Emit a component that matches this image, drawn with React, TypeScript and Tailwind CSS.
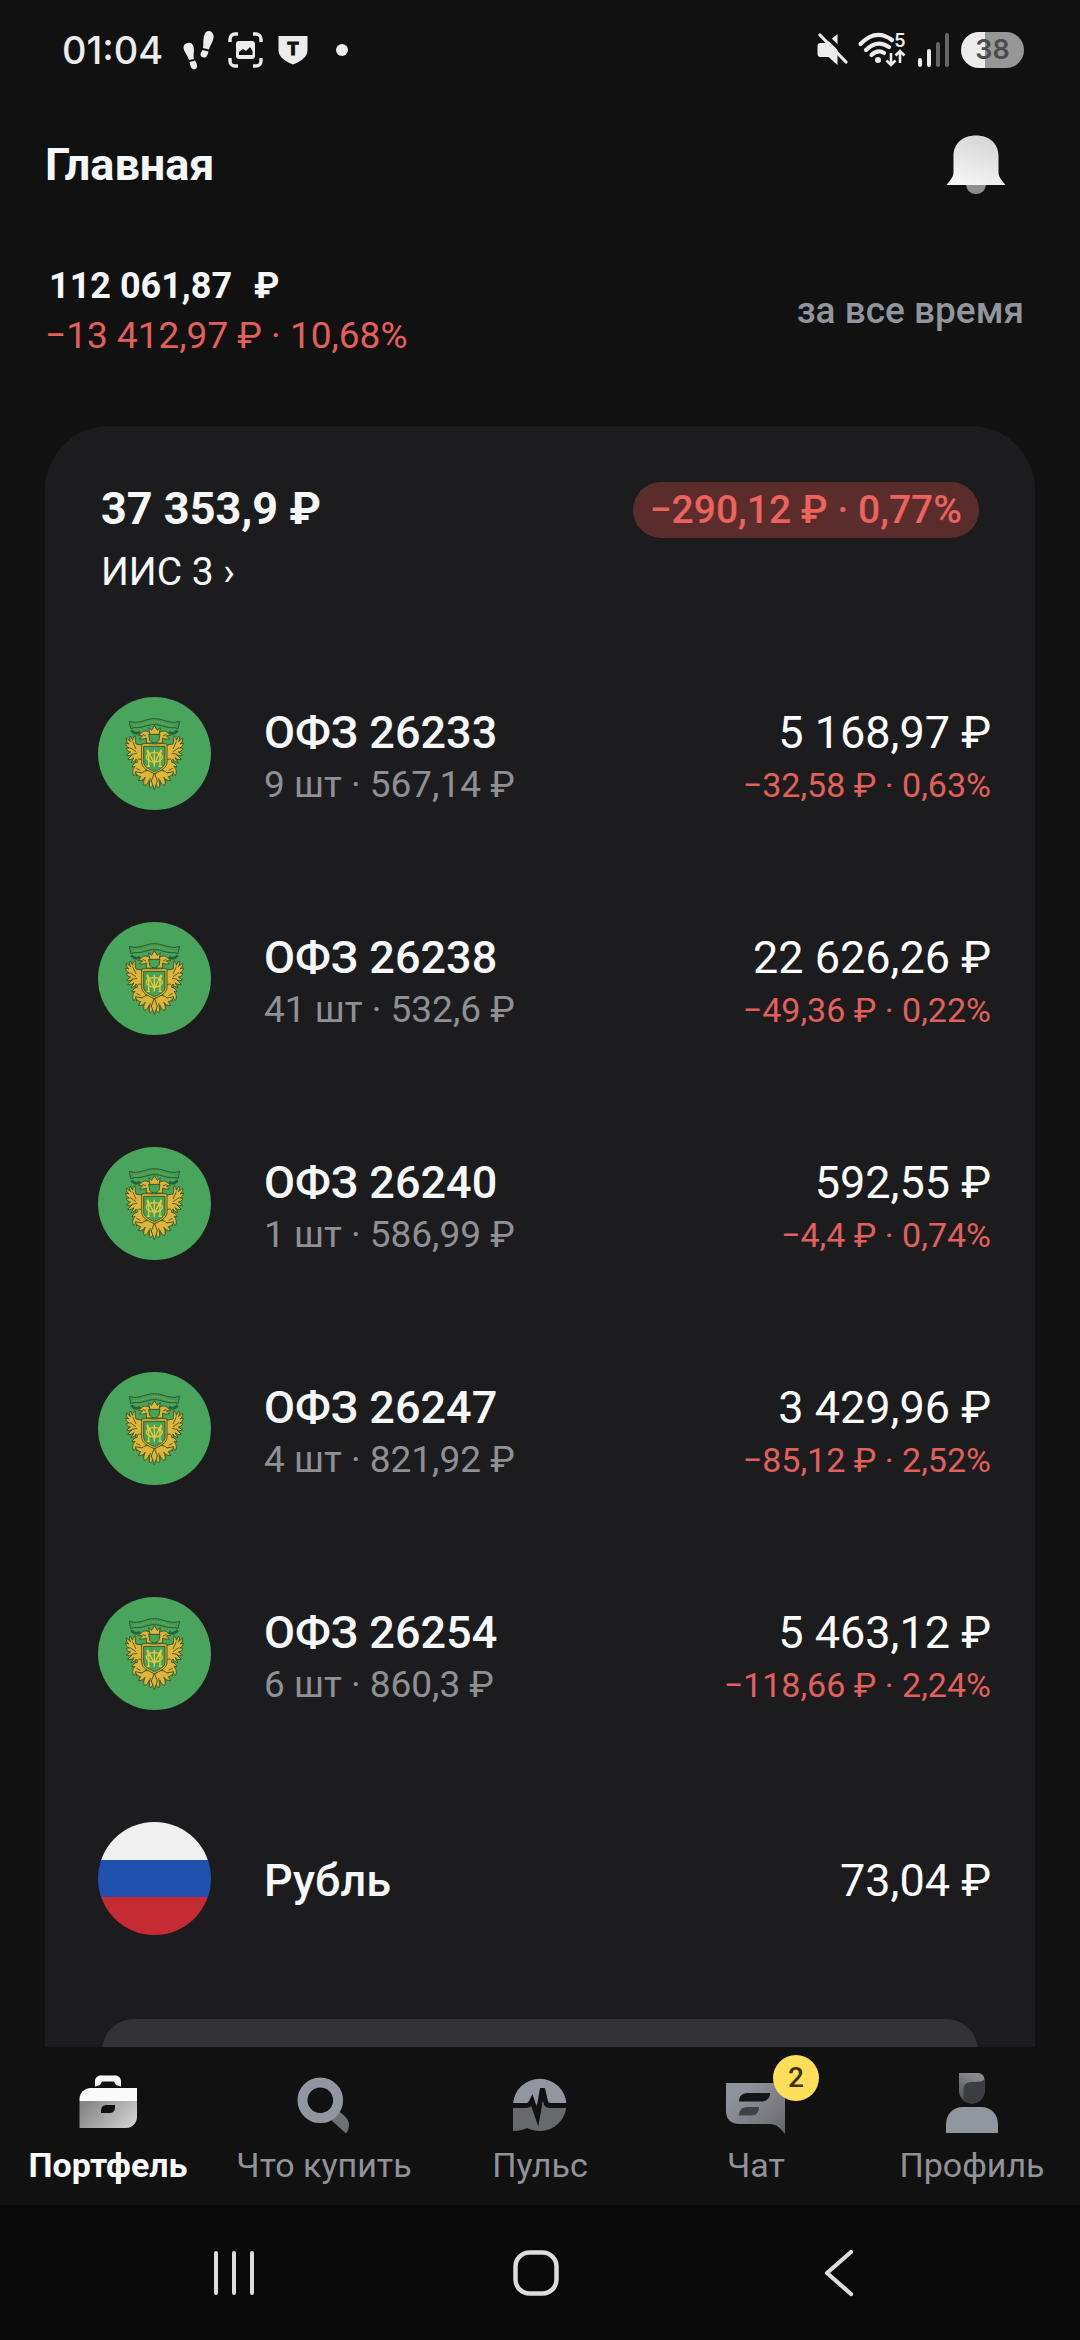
import React from 'react';

interface Position {
  title: string;
  details: string;
  value: string;
  change: string;
}

const positions: Position[] = [
  { title: 'ОФЗ 26233', details: '9 шт · 567,14 ₽', value: '5 168,97 ₽', change: '−32,58 ₽ · 0,63%' },
  { title: 'ОФЗ 26238', details: '41 шт · 532,6 ₽', value: '22 626,26 ₽', change: '−49,36 ₽ · 0,22%' },
  { title: 'ОФЗ 26240', details: '1 шт · 586,99 ₽', value: '592,55 ₽', change: '−4,4 ₽ · 0,74%' },
  { title: 'ОФЗ 26247', details: '4 шт · 821,92 ₽', value: '3 429,96 ₽', change: '−85,12 ₽ · 2,52%' },
  { title: 'ОФЗ 26254', details: '6 шт · 860,3 ₽', value: '5 463,12 ₽', change: '−118,66 ₽ · 2,24%' },
];

const StatusBar: React.FC = () => (
  <div className="flex h-[100px] shrink-0 items-center justify-between pl-[62px] pr-[56px] text-[#ececec]">
    <div className="flex items-center">
      <span className="mr-5 font-[family-name:Inter,sans-serif] text-[38px] leading-[44px] font-medium">01:04</span>
      <svg className="mr-3.5" width="31" height="40" viewBox="0 0 31 40" fill="currentColor">
        <path d="M5 13c4-1 6 3 6 7 0 3-1 6 0 9l-5 1C5 26 1 22 0.500 18 0.300 15 2 13.500 5 13z" />
        <path d="M6.500 32l5.500-1.500c1 2 2.500 4 2 6.500-.5 2.500-4 3-5.500 1C7.500 36.500 7 34 6.500 32z" />
        <path d="M26 1c3.500.5 5 3.500 4.500 7-.5 4-4 8-4.500 11.500l-6-1.500c.5-3 0-6 .5-9C21 4.500 22.500.5 26 1z" />
        <path d="M19.500 20l6 1.500c-.5 2-1 4-2.500 5.500-2 1.500-5.500 0-5.500-2.500 0-1.700 1.200-3 2-4.500z" />
      </svg>
      <svg className="mr-[15px]" width="35" height="36" viewBox="0 0 35 36" fill="none">
        <path d="M2 10V7a5 5 0 0 1 5-5h3M25 2h3a5 5 0 0 1 5 5v3M33 26v3a5 5 0 0 1-5 5h-3M10 34H7a5 5 0 0 1-5-5v-3" stroke="currentColor" strokeWidth="3.400" />
        <rect x="8" y="9" width="19" height="18" rx="3" fill="currentColor" />
        <path d="M11 23v-3l4-3 3 2 4-4 2.500 4v4z" fill="#111" />
      </svg>
      <svg className="mr-7" width="30" height="30" viewBox="0 0 30 30">
        <path d="M0.500 1h29v14c0 7-6 11-14.500 14.500C6.500 26 0.500 22 0.500 15z" fill="currentColor" />
        <text x="15" y="20" textAnchor="middle" fontFamily="'Liberation Mono', monospace" fontWeight="700" fontSize="20" fill="#111" stroke="#111">Т</text>
      </svg>
      <span className="size-3 rounded-full bg-[#ececec]" />
    </div>
    <div className="flex items-center">
      <svg className="mr-2.5" width="32" height="34" viewBox="0 0 32 34">
        <path d="M4.500 10h6L21.500 1v31l-9-8H4.500a3 3 0 0 1-3-3v-8a3 3 0 0 1 3-3z" fill="currentColor" />
        <path d="M6.500 -1l27 27" stroke="#111" strokeWidth="4" />
        <path d="M4 2l26 27" stroke="currentColor" strokeWidth="3.200" strokeLinecap="round" />
      </svg>
      <svg className="mr-3 overflow-visible" width="48" height="36" viewBox="0 0 48 36">
        <g fill="none" stroke="currentColor" strokeWidth="4.200" strokeLinecap="round">
          <path d="M2.500 12Q18 -4 34 8" />
          <path d="M8 18Q19 7 31 15" />
          <path d="M13.500 23Q20 17 26 21" />
        </g>
        <circle cx="20" cy="28" r="3" fill="currentColor" />
        <text x="42" y="15" textAnchor="middle" fontFamily="Inter, sans-serif" fontWeight="600" fontSize="18" fill="currentColor">5</text>
        <path d="M33 21v12m-4.500-4.500L33 33l4.500-4.500M42 31V19m-4.500 4.500L42 19l4.500 4.500" fill="none" stroke="currentColor" strokeWidth="2.600" />
      </svg>
      <svg className="mr-3" width="31" height="36" viewBox="0 0 31 36">
        <rect x="0" y="26" width="4" height="9" rx="2" fill="currentColor" />
        <rect x="9" y="17" width="4" height="18" rx="2" fill="currentColor" />
        <rect x="18" y="10" width="4" height="25" rx="2" fill="#666" />
        <rect x="27" y="1" width="4" height="34" rx="2" fill="#666" />
      </svg>
      <span className="flex h-9 w-[63px] items-center justify-center rounded-full bg-linear-to-r from-[#ececec] from-38% to-[#979797] to-38% font-[family-name:Inter,sans-serif] text-[27px] leading-9 font-semibold text-[#4c4c4c]">
        38
      </span>
    </div>
  </div>
);

const BellIcon: React.FC = () => (
  <svg width="60" height="60" viewBox="0 0 60 60">
    <defs>
      <linearGradient id="bell" x1="0.700" y1="0" x2="0.300" y2="1">
        <stop offset="0" stopColor="#d4d4d4" />
        <stop offset="1" stopColor="#f6f6f6" />
      </linearGradient>
    </defs>
    <path d="M20 48h20c0 7-4 11-10 11s-10-4-10-11z" fill="#8e8e8e" />
    <path d="M7.500 21C7.500 9 16 0.500 30 0.500S52.500 9 52.500 21v16c0 5 3 8 7 13H0.500c4-5 7-8 7-13z" fill="url(#bell)" />
  </svg>
);

// Золотой двуглавый орёл на зелёном круге
const BondLogo: React.FC = () => (
  <svg className="size-[113px] shrink-0" viewBox="0 0 339 339">
    <circle cx="169.500" cy="169.500" r="169.500" fill="#49a45c" />
    <g stroke="#2c4a22" strokeWidth="2.500" strokeLinejoin="round">
      <path d="M94 73l14 3c28 0 36-11 61-11s34 11 62 11l14-3-5 22-10-3c-28 2-38-9-61-9s-33 11-61 9l-10 3z" fill="#3f9a58" />
      <path d="M100 100c8 10 16 12 26 4M239 100c-8 10-16 12-26 4" fill="none" strokeWidth="8" stroke="#23623c" />
      <g fill="#dfb43a">
        <g id="eagle-side">
          <path d="M140 146l-26-5c-3-7-1-14-3-25-5 4-7 8-7 14l-7-13c-4 6-3 11 1 17l-13-11c-1 8 2 13 8 18l-10-3c0 7 4 12 11 15l-9 1c1 7 6 10 13 11l-13 9c6 3 12 2 18-1l-14 14c7 2 13 0 19-5l-9 15c7-1 12-5 16-11l-3 14c6-3 10-8 12-14l6 6h14z" />
          <path d="M159 112c-6-10-18-13-26-7-4 5-10 5-12 11 5-2 9-1 13 1-3 4-8 4-9 9 8 1 14 0 20-3v15h20v-22z" />
          <path d="M138 196c-8-14-22-12-20 0-9 1-14 7-16 14l9-2c-6 8-10 17-4 28 2-5 5-8 10-9l-2 10 13-10 10 5 8-15z" />
          <path d="M169 232c-10-14-26-15-37-4l-20-4c2 9 9 14 16 15l-7 12c9 0 15-3 20-9-4 8-5 16-2 24 8-3 12-10 15-17-2 9-1 16 3 24 6-5 9-12 12-19z" />
        </g>
        <use href="#eagle-side" transform="matrix(-1 0 0 1 339 0)" />
        <path d="M152 92l9 8 8-14 9 14 9-8-4 22h-27z" />
        <path d="M169 228l9 24-9 26-9-26z" />
        <path d="M131 141c18-3 25 0 38 0s20-3 38 0v54c0 18-18 26-38 35-20-9-38-17-38-35z" />
      </g>
      <path d="M152 112h34l-3 18c-4 5-9 7-14 8-5-1-10-3-14-8z" fill="#46a35a" />
      <path d="M137 148h64v48c0 13-14 20-31.500 28-17.500-8-32.500-15-32.500-28z" fill="#46a35a" />
    </g>
    <g fill="none" stroke="#eec53b" strokeWidth="4">
      <path d="M146 160c6 4 7 14 6 48M192 160c-6 4-7 14-6 48M148 158l21 42 21-42M169 158v51M146 208h10M182 208h10" />
      <ellipse cx="169" cy="181" rx="24" ry="14" />
    </g>
    <path d="M104 134l10 22M96 152l18 12M101 172l16-3M235 134l-10 22M243 152l-18 12M238 172l-16-3M142 240l-8 14M197 240l8 14M157 243l-4 24M182 243l4 24M115 214l12 6M224 214l-12 6M134 112l10 5M205 112l-10 5" fill="none" stroke="#5d5c22" strokeWidth="3" />
    <path d="M107 86c26 2 38-12 62-12s36 14 62 12" fill="none" stroke="#79a83f" strokeWidth="5" strokeDasharray="4 3" />
  </svg>
);

const RubleLogo: React.FC = () => (
  <span className="flex size-[113px] shrink-0 flex-col overflow-hidden rounded-full">
    <span className="flex-1 bg-[#f0f0f0]" />
    <span className="flex-1 bg-[#2150ae]" />
    <span className="flex-1 bg-[#c52b32]" />
  </span>
);

const PositionRow: React.FC<Position> = ({ title, details, value, change }) => (
  <li className="flex h-[225px] items-center gap-[53px]">
    <BondLogo />
    <div className="flex-1 pt-2">
      <p className="text-[45px] leading-[54px] font-medium text-[#f6f7f8]">{title}</p>
      <p className="text-[37px] leading-[50px] text-[#8f9094]">{details}</p>
    </div>
    <div className="pt-2 text-right">
      <p className="text-[45px] leading-[54px] text-white">{value}</p>
      <p className="text-[34px] leading-[50px] text-[#e2605b]">{change}</p>
    </div>
  </li>
);

const BriefcaseIcon: React.FC = () => (
  <svg width="64" height="60" viewBox="0 0 64 60">
    <defs>
      <linearGradient id="case" x1="0" y1="0.300" x2="1" y2="0.700">
        <stop offset="0" stopColor="#858585" />
        <stop offset="1" stopColor="#cfcfcf" />
      </linearGradient>
    </defs>
    <path d="M19 13.500V8c0-3 2.500-5.500 5.500-5.500h15c3 0 5.500 2.500 5.500 5.500v5.500l-5-1.500-2-3.500H26L24 12z" fill="#fafafa" />
    <path d="M3.500 28v-2c0-6 5-11 11-11H61v13z" fill="#fafafa" />
    <path d="M3.500 28H61v16c0 6-5 11-11 11H3.500z" fill="url(#case)" />
    <path d="M25 40v-2c0-4 2-6 6-6h8v2c0 4-2 6-6 6z" fill="#111" />
  </svg>
);

const SearchIcon: React.FC = () => (
  <svg width="64" height="60" viewBox="0 0 64 60">
    <path d="M39 47l9-8c6 5 9 8 9 13 0 3-1 6-3 8.500z" fill="#6f7073" />
    <circle cx="28.300" cy="27.300" r="17.800" fill="none" stroke="#9197a0" strokeWidth="10" />
  </svg>
);

const PulseIcon: React.FC = () => (
  <svg width="64" height="60" viewBox="0 0 64 60">
    <path d="M5 31a26.800 26.800 0 0 1 53.500 0z" fill="#9197a0" />
    <path d="M5 31h53.500c0 15-12 27-26.500 27-5 0-9-1-13-3-4 2-8 3-14 3z" fill="#68696c" />
    <path d="M4 32.500h13c4 0 5-1 7-5l5.500 16 5-28 3 13c.5 3 2 4 5 4H60" fill="none" stroke="#111" strokeWidth="5" />
  </svg>
);

const ChatIcon: React.FC = () => (
  <svg width="64" height="60" viewBox="0 0 64 60" className="overflow-visible">
    <defs>
      <linearGradient id="chat" x1="0" y1="0" x2="1" y2="1">
        <stop offset="0.200" stopColor="#8e939b" />
        <stop offset="0.700" stopColor="#77797e" />
        <stop offset="1" stopColor="#606165" />
      </linearGradient>
    </defs>
    <path d="M2 10h59v51c-5-6-8-10-16-10H15C7 51 2 46 2 38z" fill="url(#chat)" />
    <path d="M15 28.500c0-5 3-8.500 9-8.500h22c0 5-3 8.500-9 8.500z" fill="#131415" />
    <path d="M15 42.500c0-5 3-8.500 8-8.500h12c0 5-3 8.500-8 8.500z" fill="#3e4043" />
  </svg>
);

const ProfileIcon: React.FC = () => (
  <svg width="64" height="60" viewBox="0 0 64 60">
    <defs>
      <linearGradient id="hair" x1="0.500" y1="0" x2="0" y2="1">
        <stop offset="0" stopColor="#8a8b8e" />
        <stop offset="1" stopColor="#4a4b4e" />
      </linearGradient>
    </defs>
    <path d="M19 0h19c4 0 6.500 3 6.500 7v11c0 7-6 12.500-12.500 12.500S19 25 19 18z" fill="url(#hair)" />
    <path d="M23.500 28V17c0-5 3-8 8-8 6 0 11 0 13-3v12c0 7-6 12.500-12.500 12.500-3 0-6-1-8.500-2.500z" fill="#3c3d40" />
    <path d="M6 60v-8c0-11 7-18 17-18h18c10 0 17 7 17 18v8z" fill="#9197a0" />
  </svg>
);

const tabs = [
  { label: 'Портфель', icon: <BriefcaseIcon />, active: true },
  { label: 'Что купить', icon: <SearchIcon /> },
  { label: 'Пульс', icon: <PulseIcon /> },
  { label: 'Чат', icon: <ChatIcon />, badge: 2 },
  { label: 'Профиль', icon: <ProfileIcon /> },
];

const TabBar: React.FC = () => (
  <nav className="grid shrink-0 grid-cols-5 bg-[#111] pt-[26px] pb-5">
    {tabs.map((tab) => (
      <button key={tab.label} type="button" className="flex flex-col items-center gap-3">
        <span className="relative">
          {tab.icon}
          {tab.badge && (
            <span className="absolute -top-[18px] left-[49px] flex size-[46px] items-center justify-center rounded-full bg-[#ffdf5a] text-[28px] leading-8 font-medium text-[#39330f]">
              {tab.badge}
            </span>
          )}
        </span>
        <span
          className={`text-[34px] leading-10 whitespace-nowrap ${tab.active ? 'font-bold text-[#fafafa]' : 'text-[#929397]'}`}
        >
          {tab.label}
        </span>
      </button>
    ))}
  </nav>
);

const SystemBar: React.FC = () => (
  <div className="grid h-[135px] shrink-0 grid-cols-3 place-items-center bg-[#090909] pr-[90px] pl-[83px] text-[#dcdcdc]">
    <button type="button" aria-label="Недавние">
      <svg width="48" height="48" viewBox="0 0 48 48" stroke="currentColor" strokeWidth="4" strokeLinecap="round">
        <path d="M6 4v40M24 4v40M42 4v40" />
      </svg>
    </button>
    <button type="button" aria-label="Домой">
      <svg width="48" height="48" viewBox="0 0 48 48" fill="none" stroke="currentColor" strokeWidth="4.500">
        <rect x="3.500" y="3.500" width="41" height="41" rx="14" />
      </svg>
    </button>
    <button type="button" aria-label="Назад">
      <svg width="48" height="48" viewBox="0 0 48 48" fill="none" stroke="currentColor" strokeWidth="4.200" strokeLinecap="round" strokeLinejoin="round">
        <path d="M36 3L12 24l24 21" />
      </svg>
    </button>
  </div>
);

export default function App() {
  return (
    <div className="flex h-screen flex-col overflow-hidden bg-[#111] font-[family-name:Roboto,'Noto_Sans',sans-serif] text-white">
      <StatusBar />

      <header className="flex h-[130px] shrink-0 items-center justify-between pr-[74px] pl-[45px]">
        <h1 className="text-[45px] leading-[54px] font-bold text-[#f6f7f8]">Главная</h1>
        <button type="button" aria-label="Уведомления">
          <BellIcon />
        </button>
      </header>

      <section className="flex shrink-0 items-center justify-between pt-[31px] pr-[56px] pb-[65px] pl-[45px]">
        <div>
          <p className="flex gap-[22px] pl-1 text-[36px] leading-[50px] font-bold text-[#f6f7f8]">
            <span>112 061,87</span>
            <span>₽</span>
          </p>
          <p className="text-[37px] leading-[50px] text-[#e2605b]">−13 412,97 ₽ · 10,68%</p>
        </div>
        <button type="button" className="text-[37px] leading-[50px] font-medium text-[#92959c]">
          за все время
        </button>
      </section>

      <main className="mx-[45px] flex min-h-0 flex-1 flex-col overflow-hidden rounded-t-[64px] bg-[#1c1c1e]">
        <div className="flex shrink-0 items-start justify-between px-[56px] pt-[56px]">
          <div>
            <p className="text-[45px] leading-[54px] font-bold text-[#f6f7f8]">37 353,9 ₽</p>
            <a href="#iis" className="block text-[39px] leading-[72px] text-[#f6f7f8]">
              ИИС 3 ›
            </a>
          </div>
          <span className="rounded-full bg-[#5a2d2c] px-[17px] text-[39px] leading-[56px] font-medium text-[#ec625d]">
            −290,12 ₽ · 0,77%
          </span>
        </div>

        <ul className="mt-[33px] shrink-0 pr-[44px] pl-[53px]">
          {positions.map((position) => (
            <PositionRow key={position.title} {...position} />
          ))}
          <li className="flex h-[225px] items-center gap-[53px]">
            <RubleLogo />
            <p className="flex-1 pt-1 text-[45px] leading-[54px] font-medium text-[#f6f7f8]">Рубль</p>
            <p className="pt-1 text-[45px] leading-[54px] text-white">73,04 ₽</p>
          </li>
        </ul>

        <button
          type="button"
          aria-label="Показать все"
          className="mx-[57px] mt-7 h-[132px] shrink-0 rounded-[32px] bg-[#333335]"
        />
      </main>

      <TabBar />
      <SystemBar />
    </div>
  );
}
